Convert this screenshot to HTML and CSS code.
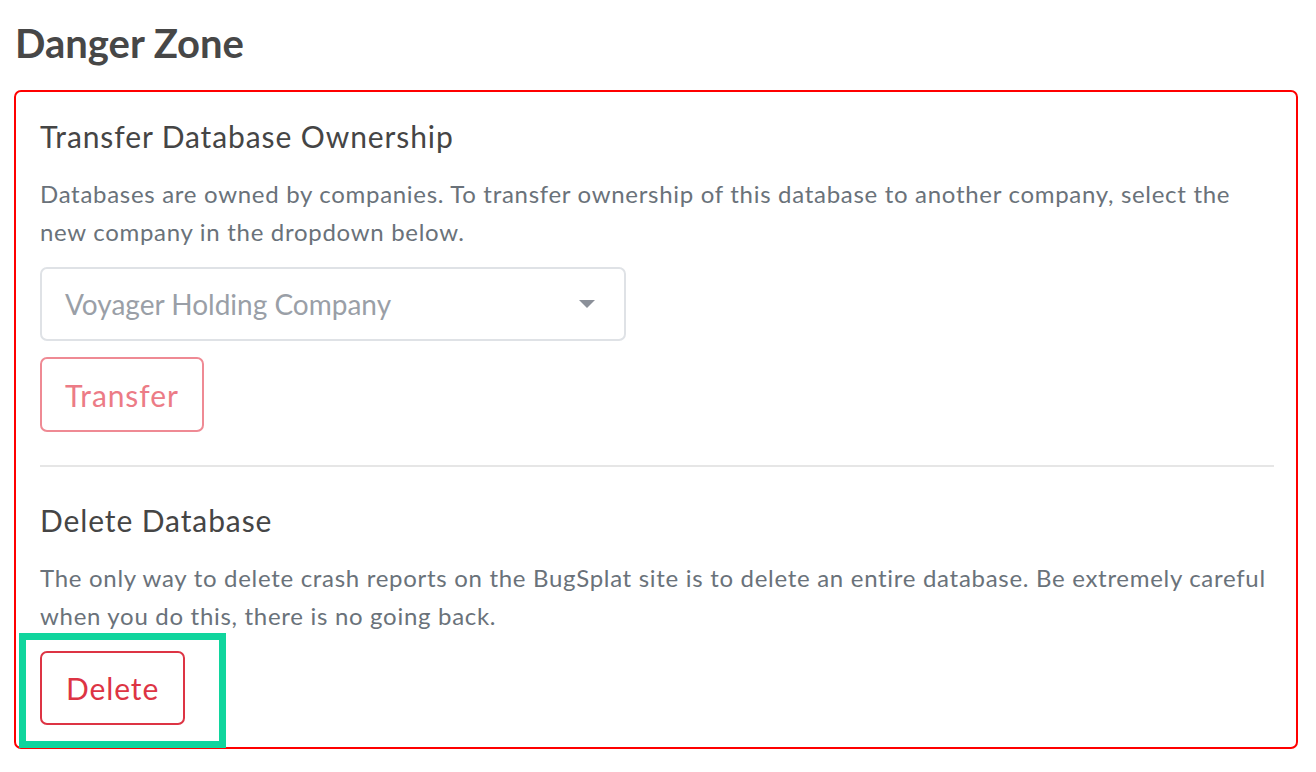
FILE: index.html
```html
<!DOCTYPE html>
<html lang="en">
<head>
<meta charset="utf-8">
<title>Danger Zone</title>
<link rel="stylesheet" href="styles.css">
</head>
<body>
<h1 class="page-title">Danger Zone</h1>
<section class="danger-card">
  <div class="block">
    <h2 class="block-title">Transfer Database Ownership</h2>
    <p class="block-text">Databases are owned by companies. To transfer ownership of this database to another company, select the new company in the dropdown below.</p>
    <div class="select">
      <span class="select-value">Voyager Holding Company</span>
      <span class="caret"></span>
    </div>
    <button class="btn btn-disabled" type="button">Transfer</button>
  </div>
  <hr class="divider">
  <div class="block">
    <h2 class="block-title">Delete Database</h2>
    <p class="block-text">The only way to delete crash reports on the BugSplat site is to delete an entire database. Be extremely careful when you do this, there is no going back.</p>
    <div class="btn-wrap">
      <button class="btn btn-danger" type="button">Delete</button>
      <span class="highlight"></span>
    </div>
  </div>
</section>
</body>
</html>
```

FILE: styles.css
```css
html, body {
  margin: 0;
  padding: 0;
  background: #ffffff;
}

body {
  font-family: Lato, "Open Sans", sans-serif;
  padding: 19px 18px 0 14px;
  color: #474747;
}

.page-title {
  margin: 0 0 23px 1px;
  font-size: 40px;
  line-height: 48px;
  font-weight: 700;
  color: #474747;
}

.danger-card {
  border: 2px solid #ff0000;
  border-radius: 7px;
  padding: 26px 22px 22px 24px;
  margin: 0;
}

.block-title {
  margin: 0;
  font-size: 30px;
  line-height: 36px;
  font-weight: 400;
  letter-spacing: 0.9px;
  color: #454545;
}

.block-text {
  margin: 21px 0 16px;
  font-size: 24px;
  line-height: 38px;
  letter-spacing: 0.7px;
  color: #6a727a;
}

.select {
  box-sizing: border-box;
  width: 586px;
  height: 74px;
  border: 2px solid #dfe2e6;
  border-radius: 7px;
  display: flex;
  align-items: center;
  justify-content: space-between;
  padding: 0 29px 0 23px;
  margin-bottom: 16px;
}

.select-value {
  font-size: 28px;
  color: #9a9fa7;
}

.caret {
  width: 0;
  height: 0;
  border-left: 8px solid transparent;
  border-right: 8px solid transparent;
  border-top: 8px solid #8b9099;
}

.btn {
  box-sizing: border-box;
  height: 75px;
  padding: 0 24px;
  border: 2px solid;
  border-radius: 7px;
  background: #ffffff;
  font-family: Lato, "Open Sans", sans-serif;
  font-size: 30px;
  letter-spacing: 0.9px;
  display: block;
}

.btn-disabled {
  border-color: #ef8a94;
  color: #ec7b86;
  padding: 0 23px;
}

.btn-danger {
  border-color: #dd3444;
  color: #dd3444;
  height: 74px;
}

.divider {
  border: 0;
  border-top: 2px solid #e6e6e6;
  margin: 33px 0 35px;
}

.btn-wrap {
  position: relative;
  display: inline-block;
  vertical-align: top;
}

.highlight {
  position: absolute;
  left: -21px;
  top: -18px;
  width: 207px;
  height: 115px;
  box-sizing: border-box;
  border: 7px solid #10d59d;
  pointer-events: none;
}
```
